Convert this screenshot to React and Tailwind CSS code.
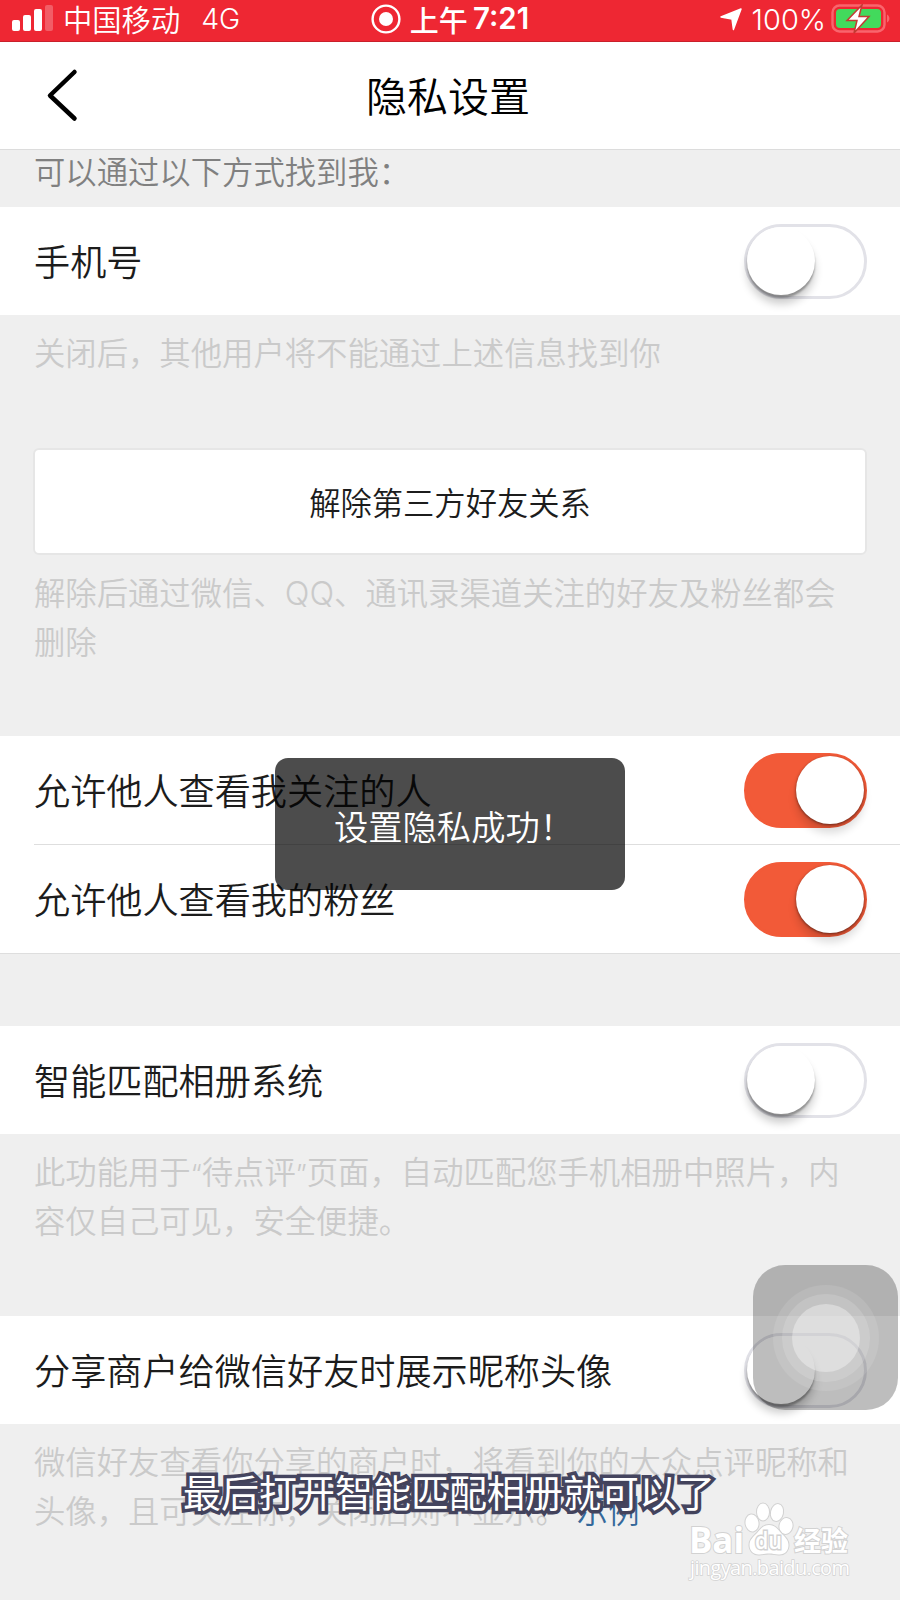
import React, { useState } from 'react';

const Toggle = ({ on, onClick }) => (
  <button
    onClick={onClick}
    className={`flex h-[75px] w-[123px] shrink-0 items-center rounded-full border-[3px] ${
      on ? 'justify-end border-[#f25a38] bg-[#f25a38]' : 'justify-start border-[#e2e2e8] bg-white'
    }`}
  >
    <span
      className={`h-[68px] w-[68px] rounded-full bg-white ${
        on
          ? 'shadow-[0_1px_3px_rgba(0,0,0,0.5),0_9px_8px_rgba(0,0,0,0.14)]'
          : 'shadow-[0_3px_2px_rgba(0,0,0,0.3),0_9px_9px_rgba(0,0,0,0.2)]'
      }`}
    ></span>
  </button>
);

const SettingRow = ({ label, defaultOn = false }) => {
  const [on, setOn] = useState(defaultOn);
  return (
    <div className="flex h-[108px] items-center justify-between bg-white pr-[33px] pl-[34px]">
      <span className="pb-[2px] text-[36.15px] leading-none font-[350] whitespace-nowrap text-[#1c1c1c]">{label}</span>
      <Toggle on={on} onClick={() => setOn(!on)} />
    </div>
  );
};

const Hint = ({ children }) => (
  <p className="pl-[34px] text-[31.35px] leading-[48.5px] font-[350] whitespace-nowrap text-[#cacaca]">
    {children}
  </p>
);

const StatusBar = () => (
  <div className="flex h-[42px] items-center justify-between border-b border-[#c9202b] bg-[#ee2733] pb-[3px] text-white">
    <div className="flex w-[300px] items-center pl-3">
      <svg width="42" height="28" viewBox="0 0 42 28" fill="#fff">
        <rect x="0" y="15" width="8" height="11" rx="2" />
        <rect x="11" y="10" width="8" height="16" rx="2" />
        <rect x="22" y="4" width="8" height="22" rx="2" />
        <rect x="33" y="0" width="8" height="26" rx="2" opacity="0.25" />
      </svg>
      <span className="ml-[9px] text-[29.3px] leading-none font-[350]">中国移动</span>
      <span className="ml-[21px] font-['Inter'] text-[28.5px] leading-none font-[350]">4G</span>
    </div>
    <div className="flex items-center">
      <svg width="30" height="30" viewBox="0 0 30 30">
        <circle cx="15" cy="15" r="13.4" fill="none" stroke="#fff" strokeWidth="2.4" />
        <circle cx="15" cy="15" r="7" fill="#fff" />
      </svg>
      <span className="ml-[9px] text-[29px] leading-none font-medium">上午</span>
      <span className="ml-[5px] font-['Inter'] text-[29.5px] leading-none font-semibold">7:21</span>
    </div>
    <div className="flex w-[300px] items-center justify-end pr-[10px]">
      <svg width="24" height="24" viewBox="0 0 24 24" fill="#fff" stroke="#fff" strokeWidth="1.5" strokeLinejoin="round">
        <path d="M22 2 14.4 22.5 13 12 2 10z" />
      </svg>
      <span className="ml-[9px] font-['Inter'] text-[29px] leading-none font-[350]">100%</span>
      <svg className="ml-[5px]" width="59" height="30" viewBox="0 0 59 30">
        <rect x="1.5" y="1.5" width="52" height="26" rx="7" fill="none" stroke="#f9656d" strokeWidth="2.4" />
        <rect x="5" y="5" width="45" height="19" rx="4" fill="#42da5c" />
        <path d="M56 10.5c3.2 1.5 3.2 6.5 0 8z" fill="#f9656d" />
        <path d="M31 1 16 16.5h10L23 29 38 12.500H28z" fill="#fff" stroke="#c33a32" strokeWidth="1.5" />
      </svg>
    </div>
  </div>
);

const AssistiveTouch = () => (
  <div className="absolute top-[1265px] left-[753px] flex h-[145px] w-[145px] items-center justify-center rounded-[32px] bg-black/26">
    <div className="flex h-[106px] w-[106px] items-center justify-center rounded-full bg-white/10">
      <div className="flex h-[88px] w-[88px] items-center justify-center rounded-full bg-white/15">
        <div className="h-[68px] w-[68px] rounded-full bg-white/35"></div>
      </div>
    </div>
  </div>
);

const Watermark = () => (
  <svg
    className="absolute top-[1496px] left-[685px]"
    width="175"
    height="88"
    viewBox="0 0 175 88"
    fill="#fff"
    stroke="#d2d2d2"
    strokeWidth="2"
    paintOrder="stroke"
  >
    <text x="4" y="57" textLength="55" lengthAdjust="spacingAndGlyphs" className="font-['Open_Sans'] text-[36px] font-bold">
      Bai
    </text>
    <ellipse cx="67" cy="27" rx="6.5" ry="8.5" transform="rotate(-8 67 27)" />
    <ellipse cx="78" cy="16" rx="6" ry="8.5" />
    <ellipse cx="92" cy="16.5" rx="6" ry="8.5" transform="rotate(12 92 16.5)" />
    <ellipse cx="101" cy="30" rx="6.5" ry="8" transform="rotate(12 101 30)" />
    <path d="M84 29c-6 0-8.5 4-12 8-4 4-7.5 7-7.5 12 0 6 4.5 10 10 9.5 3.5-.3 6-1 9.5-1s6 .7 9.5 1c6 .5 10-3.5 10-9.5 0-5-3.5-8-7.5-12-3.5-4-6-8-12-8z" />
    <text x="70" y="53" textLength="27" lengthAdjust="spacingAndGlyphs" strokeWidth="3" className="font-['Open_Sans'] text-[24px] font-semibold">
      du
    </text>
    <text x="109" y="55" textLength="54" className="text-[27px] font-bold">
      经验
    </text>
    <text x="5" y="79" textLength="160" strokeWidth="1.5" className="font-['Open_Sans'] text-[20px]">
      jingyan.baidu.com
    </text>
  </svg>
);

const App = () => {
  return (
    <div className="relative h-[1600px] w-[900px] overflow-hidden bg-[#efefef] font-['Noto_Sans_CJK_SC',sans-serif]">
      <StatusBar />
      <header className="flex h-[108px] items-center border-b border-[#dcdcdc] bg-white">
        <div className="w-[200px] pl-[46px]">
          <svg className="-mt-[2px]" width="34" height="54" viewBox="0 0 34 54" fill="none" stroke="#000" strokeWidth="4.5" strokeLinecap="round" strokeLinejoin="round">
            <path d="M28.5 4 4 27.5l24.5 23" />
          </svg>
        </div>
        <h1 className="flex-1 pr-1 pb-[2px] text-center text-[41px] leading-none font-[350] text-[#000]">隐私设置</h1>
        <div className="w-[200px]"></div>
      </header>

      <div className="flex h-[57px] items-start pl-[34px]">
        <p className="pt-[5px] text-[31.35px] leading-[32px] font-[350] text-[#808080]">可以通过以下方式找到我：</p>
      </div>
      <SettingRow label="手机号" />
      <div className="h-[133px] pt-[13px]">
        <Hint>关闭后，其他用户将不能通过上述信息找到你</Hint>
      </div>

      <div className="px-[33px]">
        <button className="h-[107px] w-full rounded-md border-2 border-[#e6e6e6] bg-white text-[31.3px] leading-none font-[350] text-[#1c1c1c]">
          解除第三方好友关系
        </button>
      </div>
      <div className="h-[181px] pt-[13px]">
        <Hint>
          解除后通过微信、<span className="font-['Inter'] text-[32.5px] leading-none font-light">QQ</span>、通讯录渠道关注的好友及粉丝都会
          <br />
          删除
        </Hint>
      </div>

      <div className="border-b border-[#dedede] bg-white">
        <SettingRow label="允许他人查看我关注的人" defaultOn />
        <div className="ml-[34px] h-px bg-[#dedede]"></div>
        <SettingRow label="允许他人查看我的粉丝" defaultOn />
      </div>

      <div className="mt-[72px]">
        <SettingRow label="智能匹配相册系统" />
      </div>
      <div className="h-[182px] pt-[13px]">
        <Hint>
          此功能用于<span className="font-['Inter'] text-[27px] leading-none font-light">“</span>待点评
          <span className="font-['Inter'] text-[27px] leading-none font-light">”</span>页面，自动匹配您手机相册中照片，内
          <br />
          容仅自己可见，安全便捷。
        </Hint>
      </div>

      <SettingRow label="分享商户给微信好友时展示昵称头像" />
      <div className="pt-[13px]">
        <Hint>
          微信好友查看你分享的商户时，将看到你的大众点评昵称和
          <br />
          头像，且可关注你，关闭后则不显示。
          <span className="ml-[10px] text-[#34689a]">示例</span>
        </Hint>
      </div>

      {/* toast */}
      <div className="absolute top-[758px] left-[275px] flex h-[132px] w-[350px] justify-center rounded-[13px] bg-black/70 pt-[50px] pl-[8px]">
        <span className="text-[34.3px] leading-[34px] font-[350] whitespace-nowrap text-white">设置隐私成功！</span>
      </div>

      <AssistiveTouch />
      <Watermark />

      {/* video caption */}
      <p className="absolute top-[1472px] left-[183px] text-[38px] leading-[38px] font-normal whitespace-nowrap text-white [-webkit-text-stroke:7px_#45455f] [paint-order:stroke_fill] [text-shadow:2px_2px_2px_rgba(60,60,80,0.4)]">
        最后打开智能匹配相册就可以了
      </p>
    </div>
  );
};

export default App;
